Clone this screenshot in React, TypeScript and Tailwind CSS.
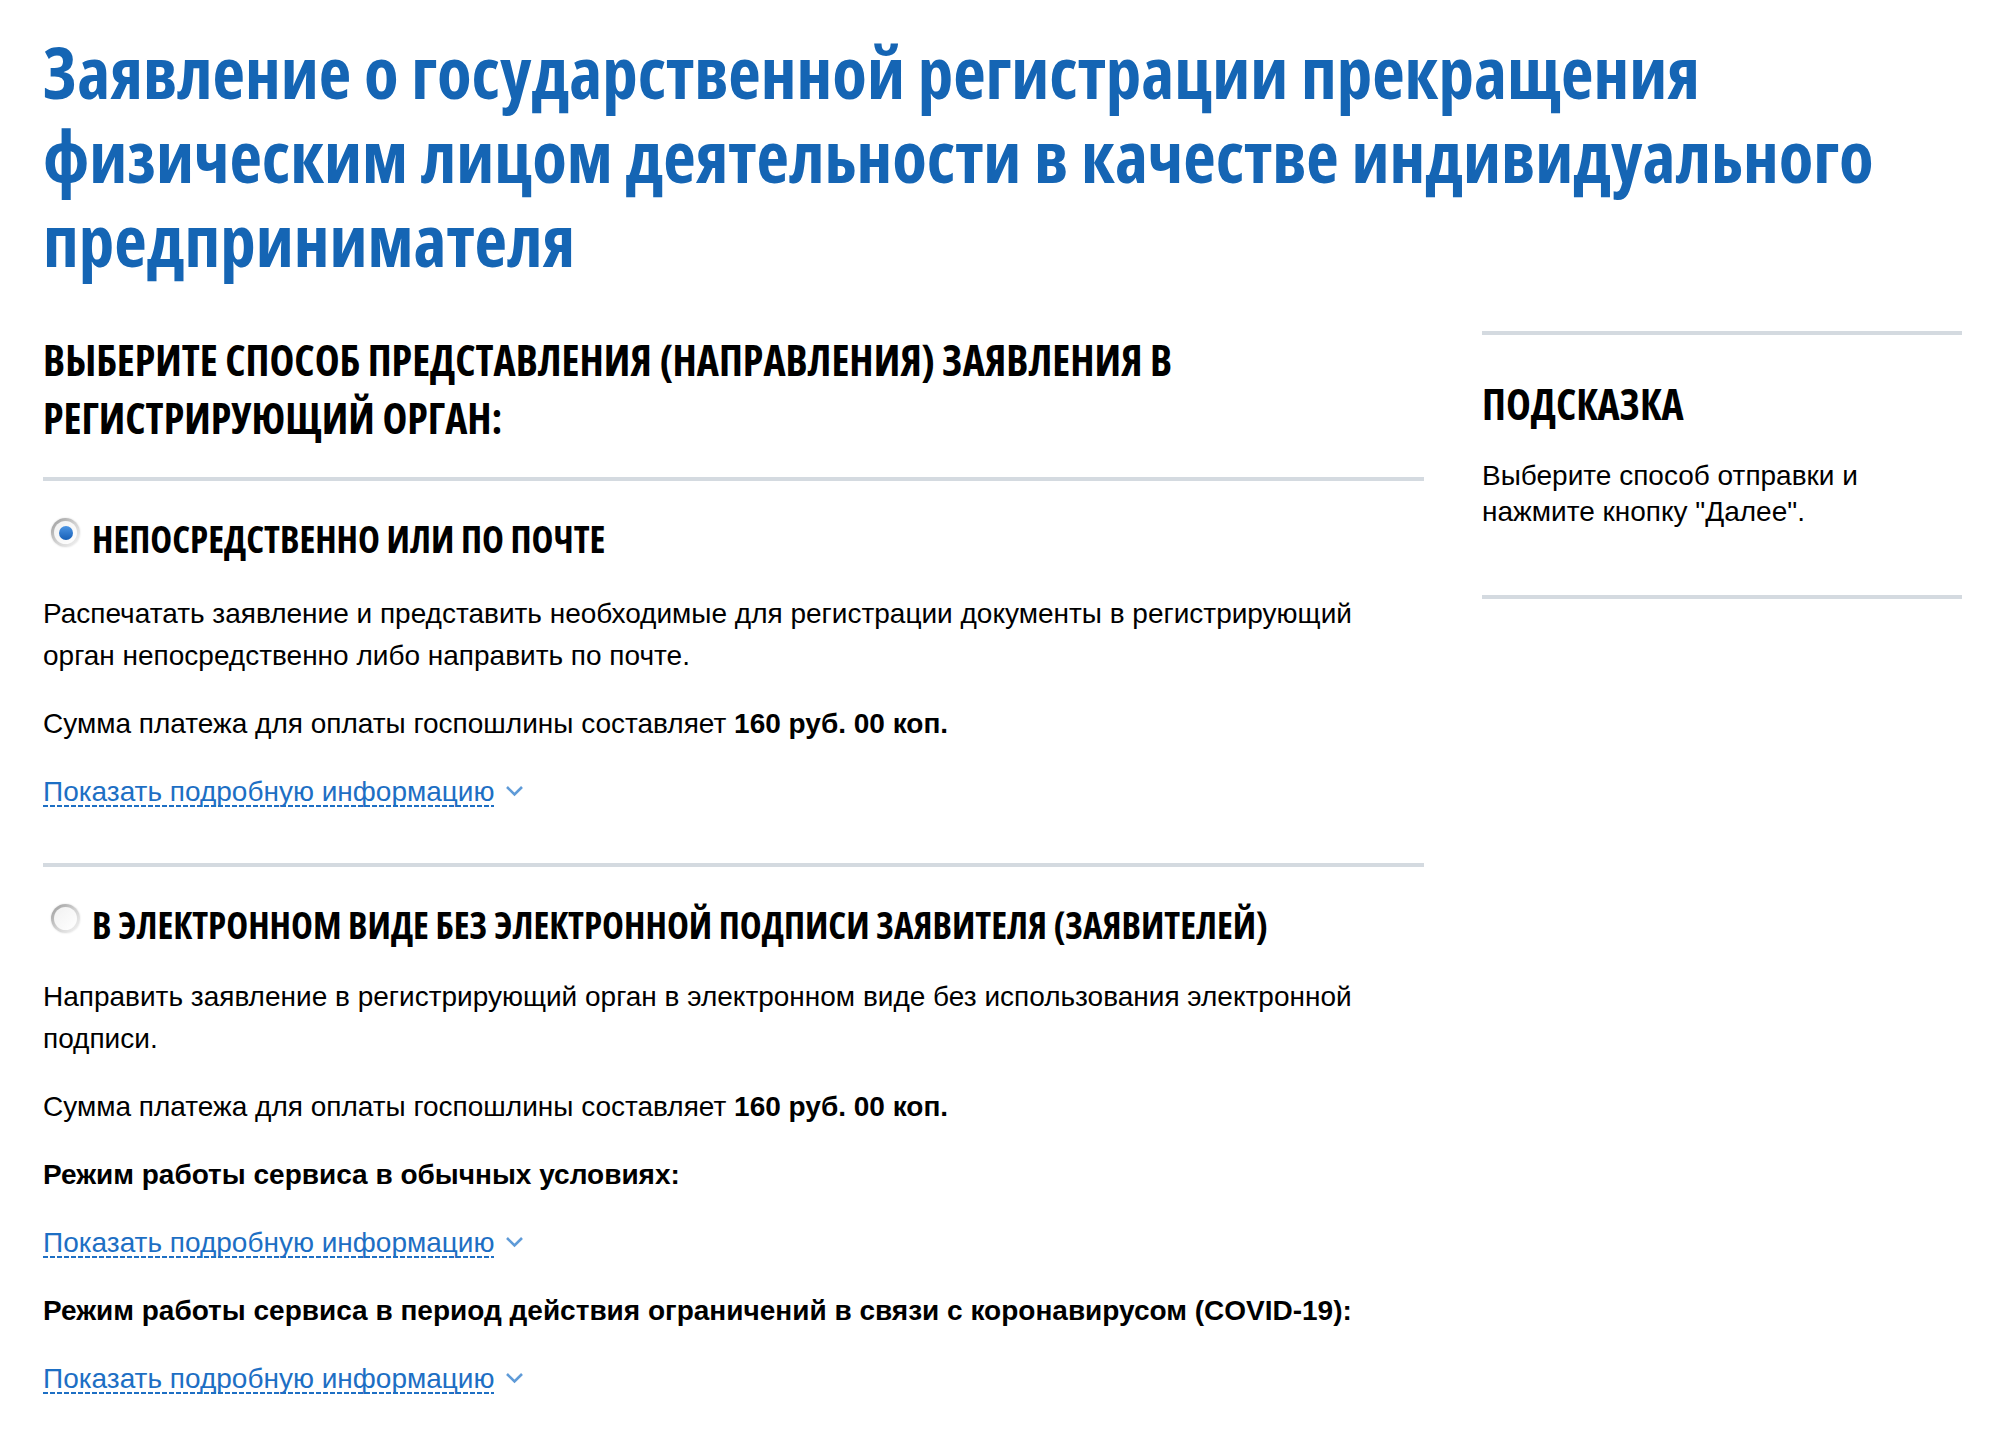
import React from "react";

function Radio({ checked }: { checked?: boolean }) {
  return (
    <span className="mt-[3px] flex h-[29px] w-[29px] shrink-0 items-center justify-center rounded-full bg-linear-to-br from-[#999999] via-[#d0d0d0] to-[#f6f6f6] shadow-[0_0_2px_rgba(0,0,0,0.15)]">
      <span className="flex h-[23px] w-[23px] items-center justify-center rounded-full bg-linear-to-br from-[#f1f1f1] to-white">
        {checked && (
          <span className="h-[14px] w-[14px] rounded-full bg-linear-to-b from-[#4b95e4] to-[#155fb6]" />
        )}
      </span>
    </span>
  );
}

function More() {
  return (
    <p className="text-[28px] leading-[42px] text-[#1d6fc4]">
      <span className="bg-[linear-gradient(to_right,#1d6fc4_5px,transparent_5px)] bg-[length:7px_2px] bg-bottom-left bg-repeat-x">
        Показать подробную информацию
      </span>
      <svg
        className="ml-[11px] mb-[6px] inline-block"
        width="19"
        height="12"
        viewBox="0 0 19 12"
      >
        <path d="M2 2 L9.5 9.5 L17 2" fill="none" stroke="#5f9bd8" strokeWidth="2.6" />
      </svg>
    </p>
  );
}

function OptionHead({ checked, children }: { checked?: boolean; children: React.ReactNode }) {
  return (
    <div className="mt-[34px] flex items-start gap-[12px] pl-[8px]">
      <Radio checked={checked} />
      <h3 className="font-['Open_Sans'] text-[37px] leading-[48px] font-bold text-black uppercase [font-stretch:75%]">
        {children}
      </h3>
    </div>
  );
}

function Sep() {
  return <div className="h-[4px] w-full bg-[#d4dae0]" />;
}

export default function App() {
  return (
    <div className="min-h-[1450px] bg-white pt-[30px] pl-[43px] font-['Liberation_Sans'] text-black">
      <h1 className="w-[1900px] font-['Open_Sans'] text-[71px] leading-[84px] font-bold text-[#1565b4] [font-stretch:75%]">
        Заявление о государственной регистрации прекращения физическим лицом деятельности в качестве индивидуального предпринимателя
      </h1>

      <div className="mt-[49px] flex gap-[58px]">
        <div className="w-[1381px] shrink-0">
          <h2 className="font-['Open_Sans'] text-[42px] leading-[58px] font-bold text-black [font-stretch:75%]">
            ВЫБЕРИТЕ СПОСОБ ПРЕДСТАВЛЕНИЯ (НАПРАВЛЕНИЯ) ЗАЯВЛЕНИЯ В РЕГИСТРИРУЮЩИЙ ОРГАН:
          </h2>
          <div className="mt-[30px]">
            <Sep />
          </div>

          <OptionHead checked>НЕПОСРЕДСТВЕННО ИЛИ ПО ПОЧТЕ</OptionHead>
          <div className="mt-[30px] flex flex-col gap-[26px] pr-[21px] text-[28px] leading-[42px]">
            <p>
              Распечатать заявление и представить необходимые для регистрации документы в регистрирующий орган
              непосредственно либо направить по почте.
            </p>
            <p>
              Сумма платежа для оплаты госпошлины составляет <b>160 руб. 00 коп.</b>
            </p>
            <More />
          </div>

          <div className="mt-[50px]">
            <Sep />
          </div>

          <OptionHead>В ЭЛЕКТРОННОМ ВИДЕ БЕЗ ЭЛЕКТРОННОЙ ПОДПИСИ ЗАЯВИТЕЛЯ (ЗАЯВИТЕЛЕЙ)</OptionHead>
          <div className="mt-[27px] flex flex-col gap-[26px] pr-[21px] text-[28px] leading-[42px]">
            <p>
              Направить заявление в регистрирующий орган в электронном виде без использования электронной подписи.
            </p>
            <p>
              Сумма платежа для оплаты госпошлины составляет <b>160 руб. 00 коп.</b>
            </p>
            <p className="font-bold">Режим работы сервиса в обычных условиях:</p>
            <More />
            <p className="font-bold">
              Режим работы сервиса в период действия ограничений в связи с коронавирусом (COVID-19):
            </p>
            <More />
          </div>
        </div>

        <aside className="flex w-[480px] shrink-0 flex-col">
          <Sep />
          <h2 className="mt-[40px] font-['Open_Sans'] text-[42px] leading-[58px] font-bold text-black [font-stretch:75%]">
            ПОДСКАЗКА
          </h2>
          <p className="mt-[25px] text-[28px] leading-[36px]">
            Выберите способ отправки и нажмите кнопку "Далее".
          </p>
          <div className="mt-[65px]">
            <Sep />
          </div>
        </aside>
      </div>
    </div>
  );
}
